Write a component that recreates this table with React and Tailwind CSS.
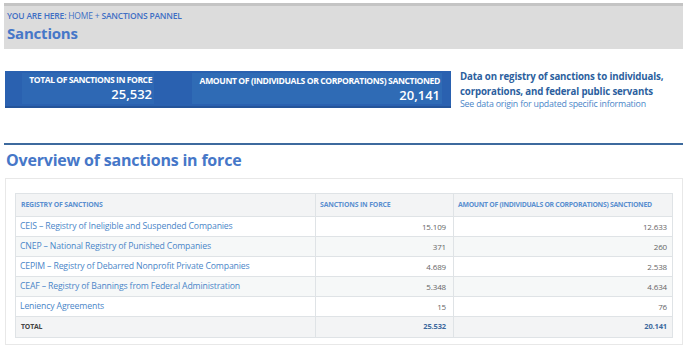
const rows = [
  { name: 'CEIS –  Registry of Ineligible and Suspended Companies', a: '15.109', b: '12.633' },
  { name: 'CNEP –  National Registry of Punished Companies', a: '371', b: '260' },
  { name: 'CEPIM – Registry of Debarred Nonprofit Private Companies', a: '4.689', b: '2.538' },
  { name: 'CEAF – Registry of Bannings from Federal Administration', a: '5.348', b: '4.634' },
  { name: 'Leniency Agreements', a: '15', b: '76' },
]

export default function App() {
  return (
    <div className="w-[687px] h-[351px] bg-white overflow-hidden font-['Open_Sans',sans-serif]">
      {/* Breadcrumb header */}
      <div className="mx-[4px] mt-[3px] h-[46px] bg-[#dcdcdc] border-t-[3px] border-[#c4c4c4] px-[3px] pt-[4px]">
        <p className="text-[8.5px] font-semibold text-[#3f6fc4] leading-[11px] tracking-[-0.2px]">
          YOU ARE HERE: <span className="font-medium">HOME + </span>SANCTIONS PANNEL
        </p>
        <h1 className="text-[15px] font-bold text-[#4677c8] leading-[22px] mt-[1px] tracking-[-0.2px]">Sanctions</h1>
      </div>

      {/* Summary bar */}
      <div className="flex mt-[22px]">
        <div className="ml-[5px] w-[446px] h-[37px] bg-[#2a61b0] border-b-2 border-[#24549a] flex pt-[2px] text-white">
          <div className="ml-[17px] w-[132px] h-[31px] bg-[#2e68b4] text-right pr-[2px]">
            <p className="text-[8.6px] font-bold leading-[11px] tracking-[-0.45px] mt-[2px] whitespace-nowrap">TOTAL OF SANCTIONS IN FORCE</p>
            <p className="text-[13px] font-semibold leading-[16px]">25,532</p>
          </div>
          <div className="ml-[38px] w-[250px] h-[31px] bg-[#2f6bb5] text-right pr-[2px]">
            <p className="text-[8.6px] font-bold leading-[11px] tracking-[-0.4px] mt-[3px] whitespace-nowrap">AMOUNT OF (INDIVIDUALS OR CORPORATIONS) SANCTIONED</p>
            <p className="text-[13px] font-semibold leading-[16px]">20,141</p>
          </div>
        </div>
        <div className="ml-[9px] -mt-[2px]">
          <p className="text-[9.7px] font-bold text-[#2c5f9e] leading-[15px] tracking-[-0.15px] w-[222px]">
            Data on registry of sanctions to individuals, corporations, and federal public servants
          </p>
          <p className="text-[8.8px] text-[#4a86c8] leading-[11px] tracking-[-0.2px] whitespace-nowrap">See data origin for updated specific information</p>
        </div>
      </div>

      {/* Section */}
      <div className="mx-[4px] mt-[33px] border-t-2 border-[#3d6a9e]">
        <h2 className="text-[16px] font-bold text-[#4677c8] leading-[22px] mt-[4px] ml-[2px] tracking-[-0.2px]">Overview of sanctions in force</h2>
      </div>

      <div className="mx-[5px] mt-[7px] w-[678px] border border-[#e8e8e8] pt-[14px] px-[9px] pb-[6px]">
        <table className="w-full border-collapse tracking-[-0.15px]">
          <thead>
            <tr className="h-[23px] bg-[#f3f4f5] text-[#5a8fd0] text-left">
              <th className="w-[300px] border border-[#dfe3e6] pl-[5px] font-bold text-[6.9px]">REGISTRY OF SANCTIONS</th>
              <th className="w-[138px] border border-[#dfe3e6] pl-[4px] font-bold text-[6.9px]">SANCTIONS IN FORCE</th>
              <th className="border border-[#dfe3e6] pl-[4px] font-bold text-[6.9px] tracking-[-0.3px]">AMOUNT OF (INDIVIDUALS OR CORPORATIONS) SANCTIONED</th>
            </tr>
          </thead>
          <tbody>
            {rows.map((r, i) => (
              <tr key={r.name} className={`h-[20px] ${i % 2 ? 'bg-[#f6f8f8]' : 'bg-white'}`}>
                <td className="border border-[#dfe3e6] pl-[4px] text-[#4a86c8] text-[8.7px]">{r.name}</td>
                <td className="border border-[#dfe3e6] pr-[7px] text-right text-[#666] text-[8px]">{r.a}</td>
                <td className="border border-[#dfe3e6] pr-[5px] text-right text-[#666] text-[8px]">{r.b}</td>
              </tr>
            ))}
            <tr className="h-[21px] bg-[#f3f4f5] font-bold">
              <td className="border border-[#dfe3e6] pl-[5px] text-[#444] text-[6.9px]">TOTAL</td>
              <td className="border border-[#dfe3e6] pr-[7px] text-right text-[#3d6a9e] text-[7.5px]">25.532</td>
              <td className="border border-[#dfe3e6] pr-[5px] text-right text-[#3d6a9e] text-[7.5px]">20.141</td>
            </tr>
          </tbody>
        </table>
      </div>
    </div>
  )
}
